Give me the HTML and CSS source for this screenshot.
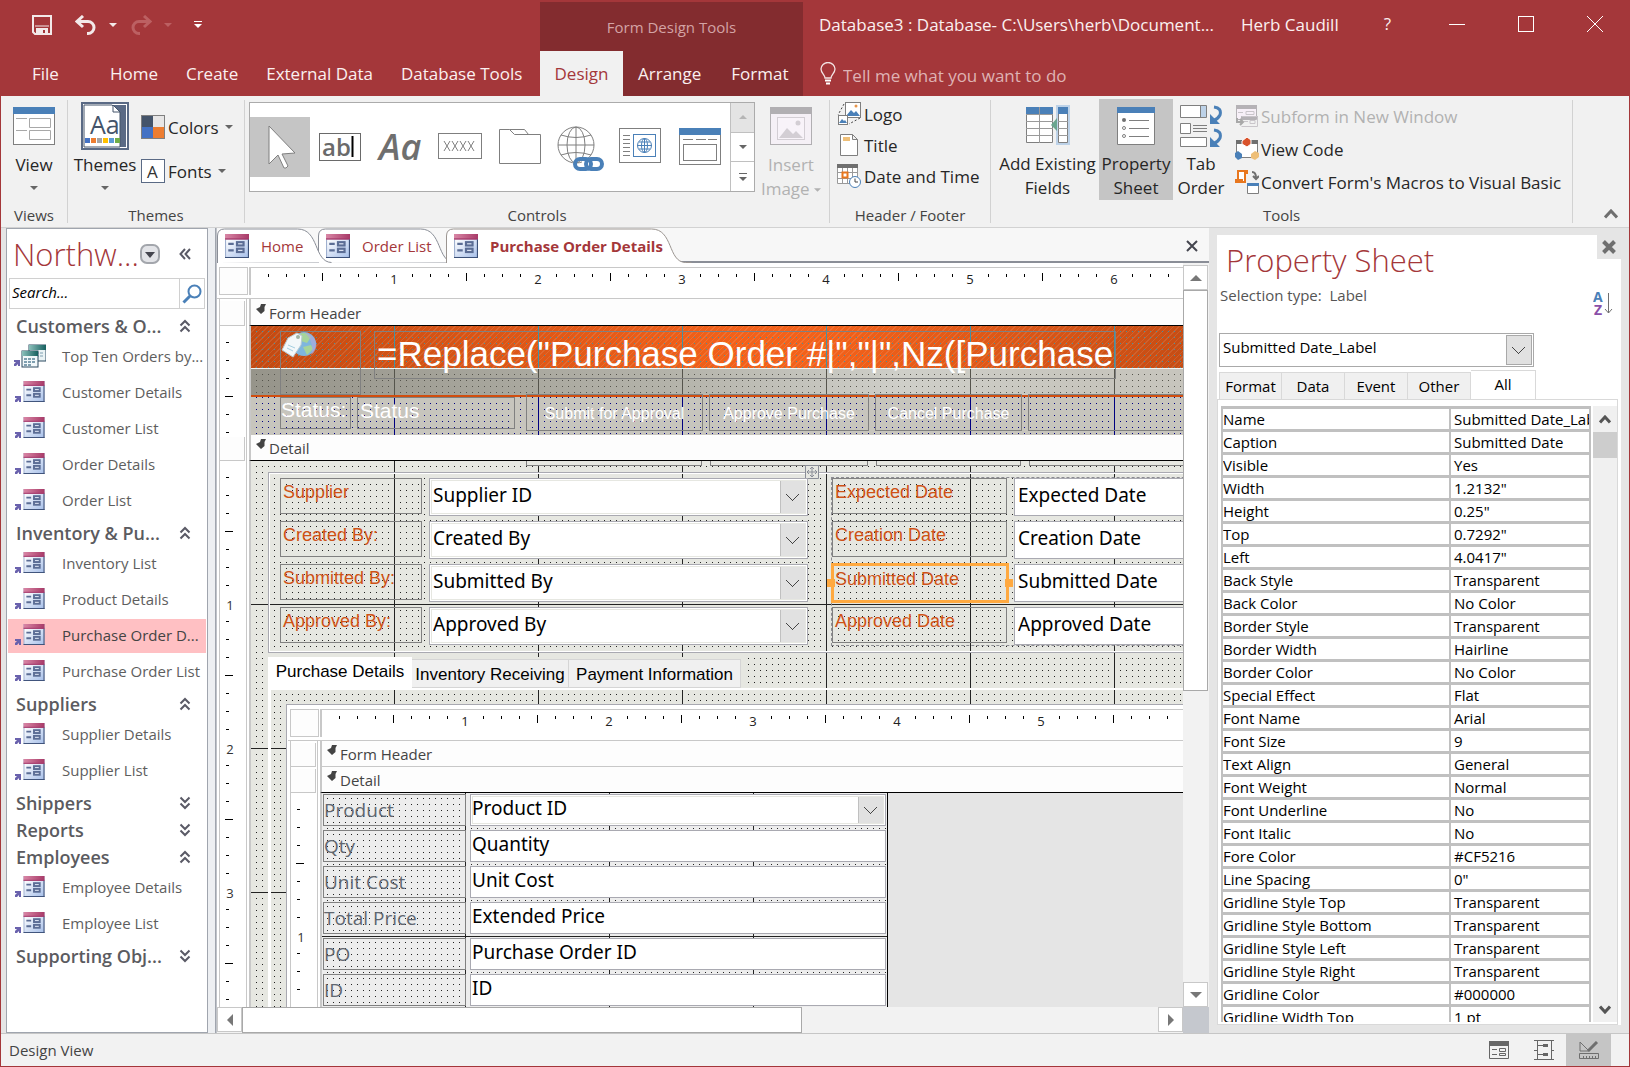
FILE: index.html
```html
<!DOCTYPE html>
<html lang="en">
<head>
<meta charset="utf-8">
<title>Database3 : Database</title>
<link rel="stylesheet" href="styles.css">
</head>
<body>
<svg class="defs" aria-hidden="true">
  <defs>
    <linearGradient id="g-pink" x1="0" x2="1"><stop offset="0" stop-color="#d987a6"/><stop offset="1" stop-color="#a83a68"/></linearGradient>
    <linearGradient id="g-body" x1="0" x2="1" y1="0" y2="1"><stop offset="0" stop-color="#ffffff"/><stop offset="1" stop-color="#a9c1ea"/></linearGradient>
    <linearGradient id="g-teal" x1="0" x2="1"><stop offset="0" stop-color="#8cc0bb"/><stop offset="1" stop-color="#16605f"/></linearGradient>
    <symbol id="form" viewBox="0 0 22 22">
      <rect width="22" height="22" fill="#9fb0cf"/><rect x="1" y="5" width="20" height="16" fill="url(#g-body)"/>
      <rect width="22" height="5" fill="url(#g-pink)"/><path d="M0 4.500h22" stroke="#a4376a"/><path d="M0 21.500h22M21.500 5v17" stroke="#3b5078"/>
      <path d="M3 9h5M3 15h5" stroke="#5b6d95" stroke-width="2"/><rect x="11" y="7.500" width="6" height="3" fill="#e8eefb" stroke="#5b6d95" stroke-width="2"/><rect x="11" y="13.500" width="6" height="3" fill="#e8eefb" stroke="#5b6d95" stroke-width="2"/>
    </symbol>
    <symbol id="nav-form" viewBox="0 0 30 22">
      <use href="#form" x="8" y="0" width="22" height="21"/>
      <path d="M0 15h6v6H4v-2L2 21H0v-2l2-2H0z" fill="#6a62ad"/>
    </symbol>
    <symbol id="nav-query" viewBox="0 0 32 24">
      <rect x="15" y="1" width="17" height="16" fill="#eaf3f5" stroke="#2d4a60"/><rect x="15" y="1" width="17" height="5" fill="url(#g-teal)"/>
      <path d="M18 9h11M18 12h11" stroke="#7f9fb0" stroke-dasharray="3 1"/>
      <rect x="8" y="7" width="16" height="16" fill="#f2f8fa" stroke="#2d4a60"/><rect x="8" y="7" width="16" height="5" fill="url(#g-teal)"/>
      <path d="M10 15h12M10 18h12M10 21h7" stroke="#7f9fb0" stroke-width="2" stroke-dasharray="3 1"/>
      <path d="M0 16h6v6H4v-2L2 22H0v-2l2-2H0z" fill="#6a62ad"/>
    </symbol>
    <symbol id="up2" viewBox="0 0 12 14"><path d="M1.500 6.500L6 2l4.500 4.500M1.500 12.500L6 8l4.500 4.500" fill="none" stroke="#5a5a66" stroke-width="2"/></symbol>
    <symbol id="down2" viewBox="0 0 12 14"><path d="M1.500 1.500L6 6l4.500-4.500M1.500 7.500L6 12l4.500-4.500" fill="none" stroke="#5a5a66" stroke-width="2"/></symbol>
    <symbol id="tri" viewBox="0 0 8 4"><path d="M0 0h8L4 4z" fill="currentColor"/></symbol>
    <symbol id="sect" viewBox="0 0 11 10"><path d="M5 0h5L8.500 3v4L5 10 0 5l4-2z" fill="#444"/></symbol>
  </defs>
</svg>

<div class="app">
<header class="top">
  <div class="quick">
    <button aria-label="Save"><svg width="20" height="20" viewBox="0 0 20 20"><path d="M1 1h18v18H3l-2-2z" fill="none" stroke="#f3e9e9" stroke-width="2"/><path d="M3 11h14" stroke="#f3e9e9"/><path d="M4 13h12v6h-3v-4h-2v4H4z" fill="#f3e9e9"/></svg></button>
    <button aria-label="Undo" class="undo"><svg width="22" height="20" viewBox="0 0 22 20"><path d="M8 1L2 6.500 8 12M2 6.500h11a6 6 0 0 1 0 12h-1" fill="none" stroke="#f3e9e9" stroke-width="3"/></svg></button>
    <button aria-label="Undo list" class="dd"><svg width="8" height="4"><use href="#tri"/></svg></button>
    <button aria-label="Redo" class="undo off"><svg width="22" height="20" viewBox="0 0 22 20"><path d="M14 1l6 5.500-6 5.500M20 6.500H9a6 6 0 0 0 0 12h1" fill="none" stroke="#bc6062" stroke-width="3"/></svg></button>
    <button aria-label="Redo list" class="dd off"><svg width="8" height="4"><use href="#tri"/></svg></button>
    <button aria-label="Customize" class="custom"><svg width="8" height="8" viewBox="0 0 8 8"><path d="M0 .500h8" stroke="#fff"/><path d="M0 3h8L4 7z" fill="#fff"/></svg></button>
  </div>
  <nav class="rtabs"><button class="file">File</button><button>Home</button><button>Create</button><button>External Data</button><button>Database Tools</button></nav>
  <div class="context">Form Design Tools</div>
  <nav class="rtabs ctx"><button class="on">Design</button><button>Arrange</button><button>Format</button></nav>
  <div class="winbar">
    <span class="title">Database3 : Database- C:\Users\herb\Document...</span>
    <span class="user">Herb Caudill</span>
    <button aria-label="Help" class="help">?</button>
    <button aria-label="Minimize"><svg width="16" height="16"><path d="M0 8.500h16" stroke="#fff"/></svg></button>
    <button aria-label="Maximize"><svg width="16" height="16"><rect x=".5" y=".5" width="15" height="15" fill="none" stroke="#fff"/></svg></button>
    <button aria-label="Close"><svg width="16" height="16"><path d="M0 0l16 16M16 0L0 16" stroke="#fff"/></svg></button>
  </div>
  <div class="tell"><svg width="16" height="23" viewBox="0 0 16 23"><path d="M5 16c0-3-4-5-4-9a7 6.500 0 0 1 14 0c0 4-4 6-4 9z" fill="none" stroke="#f3e3e3" stroke-width="1.300"/><path d="M5 18.500h6" stroke="#fff" stroke-width="2"/><path d="M6 21.500h4" stroke="#fff" stroke-width="2"/></svg><input aria-label="Tell me" placeholder="Tell me what you want to do"></div>
</header>

<section class="ribbon">
  <div class="rgroup views">
    <div class="rbody">
      <button class="big"><svg width="42" height="38" viewBox="0 0 42 38"><rect x=".5" y=".5" width="41" height="37" fill="#fff" stroke="#7f7f7f"/><path d="M0 0h42v7H0z" fill="#4a80b8"/><path d="M3 11.500h11M3 23.500h11" stroke="#a8a8a8"/><path d="M16.500 11.500h21v9h-21zM16.500 23.500h21v9h-21z" fill="none" stroke="#a8a8a8"/></svg><span>View</span><svg class="arr" width="8" height="4"><use href="#tri"/></svg></button>
    </div>
    <div class="rlabel">Views</div>
  </div>
  <div class="rgroup themes">
    <div class="rbody">
      <button class="big theme"><svg width="48" height="48" viewBox="0 0 48 48"><rect x="1" y="1" width="46" height="46" fill="#fff" stroke="#5a6a85" stroke-width="2"/><path d="M32 3h13v42H39V10z" fill="#5a6a85"/><path d="M3 45V3h28l8 7v35z" fill="#fff" stroke="#44546a"/><path d="M32 3v7h7z" fill="#fff" stroke="#44546a"/><text x="9" y="32" font-size="25" fill="#44546a">Aa</text><path d="M4 36h5v5H4z" fill="#4472c4"/><path d="M10 36h5v5h-5z" fill="#ed7d31"/><path d="M16 36h5v5h-5z" fill="#a5a5a5"/><path d="M22 36h5v5h-5z" fill="#ffc000"/><path d="M28 36h5v5h-5z" fill="#5b9bd5"/><path d="M34 36h5v5h-5z" fill="#70ad47"/></svg><span>Themes</span><svg class="arr" width="8" height="4"><use href="#tri"/></svg></button>
      <div class="stack two">
        <button><svg width="24" height="24" viewBox="0 0 24 24"><path d="M0 0h24v24H0z" fill="#7f7f7f"/><path d="M1 1h11v11H1z" fill="#44546a"/><path d="M12 1h11v11H12z" fill="#e7e6e6"/><path d="M1 12h11v11H1z" fill="#4472c4"/><path d="M12 12h11v11H12z" fill="#ed7d31"/></svg><span>Colors</span><svg class="arr" width="8" height="4"><use href="#tri"/></svg></button>
        <button><svg width="24" height="24" viewBox="0 0 24 24"><rect x=".5" y=".5" width="23" height="23" fill="#fff" stroke="#5a6a85"/><text x="6" y="19" font-size="17" fill="#333">A</text></svg><span>Fonts</span><svg class="arr" width="8" height="4"><use href="#tri"/></svg></button>
      </div>
    </div>
    <div class="rlabel">Themes</div>
  </div>
  <div class="rgroup controls">
    <div class="rbody">
      <div class="gallery">
        <button class="on" aria-label="Select"><svg width="60" height="60" viewBox="0 0 60 60"><path d="M19 9v38l9-9 6 13q2 1 4-2l-6-12 13-1z" fill="#fff" stroke="#7f7f7f"/></svg></button>
        <button aria-label="Text Box"><svg width="60" height="60" viewBox="0 0 60 60"><rect x="9.500" y="16.500" width="41" height="27" fill="#fff" stroke="#6a6a6a"/><text x="12" y="39" font-size="24" font-weight="600" fill="#6a6a6a">ab</text><path d="M42.500 19v21" stroke="#000" stroke-width="2"/></svg></button>
        <button aria-label="Label"><svg width="60" height="60" viewBox="0 0 60 60"><text x="9" y="43" font-size="36" font-weight="600" font-style="italic" fill="#6f6f6f">Aa</text></svg></button>
        <button aria-label="Button"><svg width="60" height="60" viewBox="0 0 60 60"><rect x="8.500" y="16.500" width="43" height="25" fill="#fff" stroke="#7f7f7f"/><path d="M14 24l6 10m0-10l-6 10M22 24l6 10m0-10l-6 10M30 24l6 10m0-10l-6 10M38 24l6 10m0-10l-6 10" stroke="#7f7f7f"/></svg></button>
        <button aria-label="Tab Control"><svg width="60" height="60" viewBox="0 0 60 60"><path d="M9.500 46.500v-34h10l5 5h26v29zM19.500 12.500h15l4 5" fill="none" stroke="#7f7f7f"/></svg></button>
        <button aria-label="Link"><svg width="60" height="60" viewBox="0 0 60 60"><g fill="none" stroke="#7f7f7f"><circle cx="26" cy="28" r="18"/><ellipse cx="26" cy="28" rx="9" ry="18"/><path d="M26 10v36M8 28h36M11 18q15 5 30 0M11 38q15-5 30 0"/></g><path d="M32 41h18v14H32z" fill="#fff"/><g fill="none" stroke="#4a80b8" stroke-width="4"><rect x="25" y="42" width="16" height="10" rx="5"/><rect x="36" y="42" width="16" height="10" rx="5"/></g></svg></button>
        <button aria-label="Web Browser Control"><svg width="60" height="60" viewBox="0 0 60 60"><rect x="9.500" y="11.500" width="41" height="34" fill="#fff" stroke="#7f7f7f"/><path d="M13 18.500h7M13 22.500h7M13 26.500h7M13 30.500h7M13 34.500h7M13 38.500h7" stroke="#7f7f7f"/><rect x="23.500" y="17.500" width="22" height="22" fill="#fff" stroke="#4a80b8"/><g fill="none" stroke="#4a80b8"><circle cx="34.500" cy="28.500" r="7"/><ellipse cx="34.500" cy="28.500" rx="3" ry="7"/><path d="M27 28.500h15M29 25h11M29 32h11M34.500 21v15"/></g></svg></button>
        <button aria-label="Navigation Control"><svg width="60" height="60" viewBox="0 0 60 60"><rect x="9.500" y="11.500" width="41" height="36" fill="#fff" stroke="#7f7f7f"/><path d="M9 11h42v7H9z" fill="#4a80b8"/><path d="M13 22.500h10M26 22.500h10M38 22.500h9" stroke="#7f7f7f"/><rect x="13.500" y="27.500" width="33" height="16" fill="#fff" stroke="#7f7f7f"/></svg></button>
        <div class="gscroll">
          <button class="dim" aria-label="Row up"><svg width="8" height="4"><path d="M0 4h8L4 0z" fill="#b5b5b5"/></svg></button>
          <button aria-label="Row down"><svg width="8" height="4"><use href="#tri"/></svg></button>
          <button aria-label="More"><svg width="8" height="8" viewBox="0 0 8 8"><path d="M0 .500h8" stroke="currentColor"/><path d="M0 4h8L4 8z" fill="currentColor"/></svg></button>
        </div>
      </div>
      <button class="big insert" disabled><svg width="42" height="38" viewBox="0 0 42 38"><rect x=".5" y=".5" width="41" height="37" fill="#f5f0f6" stroke="#b1afb2"/><path d="M0 0h42v7H0z" fill="#b1afb2"/><rect x="7.500" y="10.500" width="27" height="22" fill="#f8f3f9" stroke="#d3ced4"/><path d="M9 31l8-10 6 6 3-3 7 7z" fill="#d3ced4"/><circle cx="28" cy="16" r="2.500" fill="#d3ced4"/></svg><span>Insert<br>Image <svg width="7" height="4"><use href="#tri"/></svg></span></button>
    </div>
    <div class="rlabel">Controls</div>
  </div>
  <div class="rgroup hf">
    <div class="rbody">
      <div class="stack three">
        <button><svg width="24" height="24" viewBox="0 0 24 24"><path d="M7 2L1 13M23 16l-11 6" stroke="#444" stroke-dasharray="2 2"/><rect x="8.500" y=".5" width="15" height="15" fill="#fff" stroke="#7f7f7f"/><path d="M9 14l5-6 3 3 2-2 4 5z" fill="#4a80b8"/><circle cx="19" cy="4" r="1.500" fill="#e8954a"/><rect x="1.500" y="13.500" width="9" height="9" fill="#fff" stroke="#7f7f7f"/><path d="M2 21l3-4 2 2 1-1 2 3z" fill="#4a80b8"/></svg><span>Logo</span></button>
        <button><svg width="24" height="24" viewBox="0 0 24 24"><path d="M3.500 1.500h12l5 5v16h-17zM15.500 1.500v5h5" fill="#fff" stroke="#7f7f7f"/><path d="M6 4h7v4H6z" fill="#eebf78"/></svg><span>Title</span></button>
        <button><svg width="24" height="24" viewBox="0 0 24 24"><path d="M.500.500h20v19H.500zM.500 8.500h20M.500 14.500h20M5.500 3v17M10.500 3v17M15.500 3v17" fill="#fff" stroke="#9a9a9a"/><path d="M0 0h21v4H0z" fill="#6f6f6f"/><rect x="5.500" y="8.500" width="5" height="5" fill="#fff" stroke="#e8771e" stroke-width="2"/><circle cx="18" cy="18" r="5.500" fill="#fff" stroke="#4a80b8"/><path d="M18 14.500V18h3" fill="none" stroke="#444"/></svg><span>Date and Time</span></button>
      </div>
    </div>
    <div class="rlabel">Header / Footer</div>
  </div>
  <div class="rgroup tools">
    <div class="rbody">
      <button class="big add"><svg width="44" height="40" viewBox="0 0 44 40"><path d="M30 0h14v40H30z" fill="#bdd2e8"/><path d="M.500 2.500h26v35H.500z" fill="#fff" stroke="#7f7f7f"/><path d="M0 2h27v7H0z" fill="#4a80b8"/><path d="M13.500 2v36M0 9.500h27M0 16.500h27M0 23.500h27M0 30.500h27" stroke="#9a9a9a"/><path d="M32.500 2.500h9v35h-9z" fill="#fff" stroke="#7f7f7f"/><path d="M32 2h10v7H32z" fill="#4a80b8"/><path d="M32 16.500h10M32 23.500h10M32 30.500h10" stroke="#9a9a9a"/><path d="M31 13v13l-6-6z" fill="#6aa58f"/></svg><span>Add Existing<br>Fields</span></button>
      <button class="big prop on"><svg width="38" height="40" viewBox="0 0 38 40"><path d="M.500 1.500h37v37H.500z" fill="#fff" stroke="#7f7f7f"/><path d="M0 1h38v6H0z" fill="#4a80b8"/><circle cx="7" cy="14" r="2" fill="#6f6f6f"/><g fill="none" stroke="#7f7f7f"><circle cx="7" cy="22" r="1.500"/><circle cx="7" cy="30" r="1.500"/><path d="M12 14.500h20M12 22.500h20M12 30.500h20"/></g></svg><span>Property<br>Sheet</span></button>
      <button class="big taborder"><svg width="42" height="42" viewBox="0 0 42 42"><path d="M.500.500h26v12H.500zM.500 18.500h10v10H.500zM.500 32.500h26v9H.500z" fill="#fff" stroke="#7f7f7f"/><path d="M21 1h5v11h-5z" fill="#bdd2e8"/><path d="M20.500 1v11M13 20.500h14M13 23.500h14M13 26.500h14" stroke="#7f7f7f"/><path d="M34 2q8 1 6 8-2 4-7 6M34 25q8 1 6 8-2 4-7 6" fill="none" stroke="#4a80b8" stroke-width="3"/><path d="M30 9v10h10zM30 32v10h10z" fill="#4a80b8"/></svg><span>Tab<br>Order</span></button>
      <div class="stack three wide">
        <button disabled><svg width="24" height="24" viewBox="0 0 24 24"><path d="M1.500 1.500h20v14h-20z" fill="#f7f0f8" stroke="#b5b2b6"/><path d="M1 1h21v4H1zM6 12h17v3H6z" fill="#b5b2b6"/><path d="M3 8.500h5M11 7.500h8v3h-8zM6.500 12.500h16v10h-16M9 17.500h4M15 16.500h5v3h-5z" fill="none" stroke="#c9c5ca"/><path d="M2 14v4h6m-3-3l3 3-3 3" fill="none" stroke="#a8a8a8" stroke-width="2"/></svg><span>Subform in New Window</span></button>
        <button><svg width="24" height="24" viewBox="0 0 24 24"><path d="M1.500 3.500h21v17h-21z" fill="#fff" stroke="#7f7f7f"/><path d="M1 3h22v4H1z" fill="#6f6f6f"/><path d="M7 4l5-4 4 3v4l-4 3-5-3z" fill="#d9532c" stroke="#fff"/><path d="M0 16l3-2 4 3v4l-4 2-3-3z" fill="#4a80b8"/><path d="M16 17l4-3 4 2v4l-4 3-4-2z" fill="#eebf78"/></svg><span>View Code</span></button>
        <button><svg width="24" height="24" viewBox="0 0 24 24"><path d="M3 11V1h9v2h-2v9H1v-2h7" fill="#fff" stroke="#e8771e" stroke-width="2"/><path d="M17 2q4 0 4 6m-3-2l3 3 3-3" fill="none" stroke="#6f6f6f" stroke-width="2"/><path d="M12.500 13.500h11v10h-11z" fill="#fff" stroke="#7f7f7f"/><path d="M12 13h12v3H12z" fill="#4a80b8"/></svg><span>Convert Form's Macros to Visual Basic</span></button>
      </div>
    </div>
    <div class="rlabel">Tools</div>
  </div>
  <button class="collapse" aria-label="Collapse ribbon"><svg width="14" height="10" viewBox="0 0 14 10"><path d="M1 8.500L7 2l6 6.500" fill="none" stroke="#6f6f6f" stroke-width="3"/></svg></button>
</section>

<main class="work">
  <aside class="nav">
    <div class="nhead"><h1>Northw...</h1><button aria-label="Choose objects"><svg width="20" height="20" viewBox="0 0 20 20"><rect x="1" y="1" width="18" height="18" rx="6" fill="#e3e4e8" stroke="#a3a6ac" stroke-width="2"/><path d="M5 8h10l-5 6z" fill="#45464f"/></svg></button><button aria-label="Shutter" class="shut"><svg width="12" height="12" viewBox="0 0 12 12"><path d="M6 1L1.500 6 6 11M11 1L6.500 6l4.500 5" fill="none" stroke="#5a5a66" stroke-width="2"/></svg></button></div>
    <div class="search"><input aria-label="Search" placeholder="Search..."><button aria-label="Go"><svg width="20" height="20" viewBox="0 0 20 20"><circle cx="12.500" cy="7.500" r="6" fill="none" stroke="#4a80b8" stroke-width="2"/><path d="M8 12l-6.500 6.500" stroke="#4a80b8" stroke-width="3"/></svg></button></div>
    <button class="ngroup"><span>Customers &amp; O...</span><svg width="12" height="14"><use href="#up2"/></svg></button>
    <a class="nitem" href="#"><svg width="32" height="24"><use href="#nav-query"/></svg>Top Ten Orders by...</a>
    <a class="nitem" href="#"><svg width="30" height="22"><use href="#nav-form"/></svg>Customer Details</a>
    <a class="nitem" href="#"><svg width="30" height="22"><use href="#nav-form"/></svg>Customer List</a>
    <a class="nitem" href="#"><svg width="30" height="22"><use href="#nav-form"/></svg>Order Details</a>
    <a class="nitem" href="#"><svg width="30" height="22"><use href="#nav-form"/></svg>Order List</a>
    <button class="ngroup"><span>Inventory &amp; Pu...</span><svg width="12" height="14"><use href="#up2"/></svg></button>
    <a class="nitem" href="#"><svg width="30" height="22"><use href="#nav-form"/></svg>Inventory List</a>
    <a class="nitem" href="#"><svg width="30" height="22"><use href="#nav-form"/></svg>Product Details</a>
    <a class="nitem on" href="#"><svg width="30" height="22"><use href="#nav-form"/></svg>Purchase Order D...</a>
    <a class="nitem" href="#"><svg width="30" height="22"><use href="#nav-form"/></svg>Purchase Order List</a>
    <button class="ngroup"><span>Suppliers</span><svg width="12" height="14"><use href="#up2"/></svg></button>
    <a class="nitem" href="#"><svg width="30" height="22"><use href="#nav-form"/></svg>Supplier Details</a>
    <a class="nitem" href="#"><svg width="30" height="22"><use href="#nav-form"/></svg>Supplier List</a>
    <button class="ngroup"><span>Shippers</span><svg width="12" height="14"><use href="#down2"/></svg></button>
    <button class="ngroup"><span>Reports</span><svg width="12" height="14"><use href="#down2"/></svg></button>
    <button class="ngroup"><span>Employees</span><svg width="12" height="14"><use href="#up2"/></svg></button>
    <a class="nitem" href="#"><svg width="30" height="22"><use href="#nav-form"/></svg>Employee Details</a>
    <a class="nitem" href="#"><svg width="30" height="22"><use href="#nav-form"/></svg>Employee List</a>
    <button class="ngroup"><span>Supporting Obj...</span><svg width="12" height="14"><use href="#down2"/></svg></button>
  </aside>
  <div class="splitter"></div>

  <section class="doc">
    <div class="dtabs">
      <button class="dtab home"><svg class="shape" width="116" height="35" viewBox="0 0 116 35"><path d="M.500 35V8q0-7 7-7h73c22 0 16 33 34 33.500z" fill="#fff"/><path d="M.500 35V8q0-7 7-7h73c22 0 16 33 34 33.500" fill="none" stroke="#8a8e97"/></svg><svg width="24" height="24"><use href="#form"/></svg><span>Home</span></button>
      <button class="dtab orders"><svg class="shape" width="138" height="35" viewBox="0 0 138 35"><path d="M.500 35V8q0-7 7-7h95c22 0 16 33 34 33.500z" fill="#fff"/><path d="M.500 35V8q0-7 7-7h95c22 0 16 33 34 33.500" fill="none" stroke="#8a8e97"/></svg><svg width="24" height="24"><use href="#form"/></svg><span>Order List</span></button>
      <button class="dtab on"><svg class="shape" width="246" height="35" viewBox="0 0 246 35"><path d="M.500 35V8q0-7 7-7h198c22 0 16 33 34 33.500l6 .500z" fill="#fff"/><path d="M.500 35V8q0-7 7-7h198c22 0 16 33 34 33.500h6" fill="none" stroke="#9b9591"/></svg><svg width="24" height="24"><use href="#form"/></svg><span>Purchase Order Details</span></button>
      <button class="dclose" aria-label="Close document"><svg width="12" height="12" viewBox="0 0 12 12"><path d="M1 1l10 10M11 1L1 11" stroke="#45464f" stroke-width="2"/></svg></button>
    </div>
    <div class="dbody">
      <div class="designer outer">
        <div class="drow rule"><div class="gut"><i class="corner"></i></div><div class="hruler"><b>1</b><b>2</b><b>3</b><b>4</b><b>5</b><b>6</b></div></div>
        <div class="drow bar first"><div class="gut"><i></i></div><h2><svg width="11" height="10"><use href="#sect"/></svg>Form Header</h2></div>
        <div class="drow"><div class="gut vr"></div>
          <div class="fheader">
            <div class="band orange"></div><div class="band grey"></div><div class="band line"></div><div class="band status"></div>
            <div class="ctl picture"><svg width="36" height="26" viewBox="0 0 36 26"><circle cx="23" cy="12" r="12" fill="#7fb6dd"/><path d="M18 2q8-3 12 3l-4 6-6-2zM22 15l8-2 2 4-6 6z" fill="#a6d49a"/><path d="M24 1a12 12 0 0 1 6 22q4-12-6-22z" fill="#b3a6dd" opacity=".6"/><path d="M1 18L7 6l9-5 5 3-1 9-8 12z" fill="#f3f8fa" stroke="#b7cbd3"/><circle cx="17" cy="5" r="2" fill="#9fb4a5"/><path d="M7 13l7 3M6 16l6 3" stroke="#a5cfe0"/></svg></div>
            <div class="ctl headline">=Replace("Purchase Order #|","|",Nz([Purchase</div>
            <label class="ctl st1" for="status">Status:</label><input class="ctl st2" id="status" value="Status" readonly>
            <div class="cmds"><button>Submit for Approval</button><button>Approve Purchase</button><button>Cancel Purchase</button><button aria-label="Blank command"></button></div>
          </div>
        </div>
        <div class="drow bar"><div class="gut"><i></i></div><h2><svg width="11" height="10"><use href="#sect"/></svg>Detail</h2></div>
        <div class="drow grow"><div class="gut vr"><b>1</b><b>2</b><b>3</b></div>
          <div class="detail">
            <div class="stubs"><i></i><i></i><i></i><i></i></div>
            <div class="frame"></div>
            <svg class="move" width="14" height="14" viewBox="0 0 14 14"><path d="M.500.500h13v13H.500z" fill="#e6e7e1" stroke="#8a8e97"/><path d="M7 2v10M2 7h10M5 4l2-2 2 2M5 10l2 2 2-2M4 5L2 7l2 2M10 5l2 2-2 2" fill="none" stroke="#8a8e97"/></svg>
            <div class="layout left">
              <label for="f1">Supplier</label><select id="f1"><option>Supplier ID</option></select>
              <label for="f2">Created By:</label><select id="f2"><option>Created By</option></select>
              <label for="f3">Submitted By:</label><select id="f3"><option>Submitted By</option></select>
              <label for="f4">Approved By:</label><select id="f4"><option>Approved By</option></select>
            </div>
            <div class="layout right">
              <label for="f5">Expected Date</label><input id="f5" value="Expected Date" readonly>
              <label for="f6">Creation Date</label><input id="f6" value="Creation Date" readonly>
              <label for="f7" class="sel">Submitted Date</label><input id="f7" value="Submitted Date" readonly>
              <label for="f8">Approved Date</label><input id="f8" value="Approved Date" readonly>
            </div>
            <div class="ptabs"><button class="on">Purchase Details</button><button>Inventory Receiving</button><button>Payment Information</button></div>
            <div class="page"></div>
            <div class="designer inner">
              <div class="drow rule"><div class="gut"><i class="corner"></i></div><div class="hruler"><b>1</b><b>2</b><b>3</b><b>4</b><b>5</b></div></div>
              <div class="drow bar first shut"><div class="gut"><i></i></div><h2><svg width="11" height="10"><use href="#sect"/></svg>Form Header</h2></div>
              <div class="drow bar"><div class="gut"><i></i></div><h2><svg width="11" height="10"><use href="#sect"/></svg>Detail</h2></div>
              <div class="drow grow"><div class="gut vr"><b>1</b></div>
                <div class="subwrap"><div class="subdetail">
                  <label for="s1">Product</label><select id="s1"><option>Product ID</option></select>
                  <label for="s2">Qty</label><input id="s2" value="Quantity" readonly>
                  <label for="s3">Unit Cost</label><input id="s3" value="Unit Cost" readonly>
                  <label for="s4">Total Price</label><input id="s4" value="Extended Price" readonly>
                  <label for="s5">PO</label><input id="s5" value="Purchase Order ID" readonly>
                  <label for="s6">ID</label><input id="s6" value="ID" readonly>
                </div></div>
              </div>
            </div>
          </div>
        </div>
      </div>
      <div class="vscroll"><button aria-label="Scroll up"><svg width="12" height="6" viewBox="0 0 12 6"><path d="M0 6h12L6 0z" fill="#777"/></svg></button><i></i><button class="end" aria-label="Scroll down"><svg width="12" height="6" viewBox="0 0 12 6"><path d="M0 0h12L6 6z" fill="#777"/></svg></button></div>
      <div class="hscroll"><button aria-label="Scroll left"><svg width="6" height="12" viewBox="0 0 6 12"><path d="M6 0v12L0 6z" fill="#777"/></svg></button><i></i><button class="end" aria-label="Scroll right"><svg width="6" height="12" viewBox="0 0 6 12"><path d="M0 0v12l6-6z" fill="#777"/></svg></button></div>
      <div class="scorner"></div>
    </div>
  </section>

  <aside class="sheet">
    <div class="shead"><h1>Property Sheet</h1><button aria-label="Close pane"><svg width="14" height="14" viewBox="0 0 14 14"><path d="M1.500 1.500l11 11M12.500 1.500l-11 11" stroke="#6f6f6f" stroke-width="4"/></svg></button></div>
    <div class="seltype"><p>Selection type:&nbsp; Label</p><button aria-label="Sort"><svg width="20" height="26" viewBox="0 0 20 26"><text x="0" y="11" font-size="14" font-weight="700" fill="#4a80b8">A</text><text x="1" y="24" font-size="14" font-weight="700" fill="#8a4fa8">Z</text><path d="M15.500 2v20M12 18l3.500 4 3.500-4" fill="none" stroke="#6f6f6f"/></svg></button></div>
    <select class="objsel" aria-label="Object"><option>Submitted Date_Label</option></select>
    <div class="stabs"><button>Format</button><button>Data</button><button>Event</button><button>Other</button><button class="on">All</button></div>
    <div class="spage">
      <div class="stable"><table>
        <tr><th>Name</th><td>Submitted Date_Label</td></tr>
        <tr><th>Caption</th><td>Submitted Date</td></tr>
        <tr><th>Visible</th><td>Yes</td></tr>
        <tr><th>Width</th><td>1.2132"</td></tr>
        <tr><th>Height</th><td>0.25"</td></tr>
        <tr><th>Top</th><td>0.7292"</td></tr>
        <tr><th>Left</th><td>4.0417"</td></tr>
        <tr><th>Back Style</th><td>Transparent</td></tr>
        <tr><th>Back Color</th><td>No Color</td></tr>
        <tr><th>Border Style</th><td>Transparent</td></tr>
        <tr><th>Border Width</th><td>Hairline</td></tr>
        <tr><th>Border Color</th><td>No Color</td></tr>
        <tr><th>Special Effect</th><td>Flat</td></tr>
        <tr><th>Font Name</th><td>Arial</td></tr>
        <tr><th>Font Size</th><td>9</td></tr>
        <tr><th>Text Align</th><td>General</td></tr>
        <tr><th>Font Weight</th><td>Normal</td></tr>
        <tr><th>Font Underline</th><td>No</td></tr>
        <tr><th>Font Italic</th><td>No</td></tr>
        <tr><th>Fore Color</th><td>#CF5216</td></tr>
        <tr><th>Line Spacing</th><td>0"</td></tr>
        <tr><th>Gridline Style Top</th><td>Transparent</td></tr>
        <tr><th>Gridline Style Bottom</th><td>Transparent</td></tr>
        <tr><th>Gridline Style Left</th><td>Transparent</td></tr>
        <tr><th>Gridline Style Right</th><td>Transparent</td></tr>
        <tr><th>Gridline Color</th><td>#000000</td></tr>
        <tr><th>Gridline Width Top</th><td>1 pt</td></tr>
      </table></div>
      <div class="sscroll"><button aria-label="Scroll up"><svg width="12" height="9" viewBox="0 0 12 9"><path d="M1 7.500L6 2l5 5.500" fill="none" stroke="#555" stroke-width="3"/></svg></button><i></i><button class="end" aria-label="Scroll down"><svg width="12" height="9" viewBox="0 0 12 9"><path d="M1 1.500L6 7l5-5.500" fill="none" stroke="#555" stroke-width="3"/></svg></button></div>
    </div>
  </aside>
</main>

<footer class="statusbar">
  <span>Design View</span>
  <button aria-label="Form View"><svg width="20" height="18" viewBox="0 0 20 18"><path d="M.500.500h19v17H.500z" fill="none" stroke="#666"/><path d="M0 0h20v5H0z" fill="#666"/><path d="M3 8.500h5M3 13.500h5M10.500 7.500h6v3h-6zM10.500 12.500h6v2h-6z" fill="none" stroke="#666"/></svg></button>
  <button aria-label="Layout View"><svg width="20" height="20" viewBox="0 0 20 20"><path d="M0 .500h20M0 19.500h20M3.500 0v20M17.500 0v20M0 10.500h3M17 10.500h3M4 5.500h8M4 14.500h8" stroke="#666"/><path d="M9 4h5v3H9zM9 13h5v3H9z" fill="#666"/></svg></button>
  <button aria-label="Design View" class="on"><svg width="20" height="18" viewBox="0 0 20 18"><path d="M1 1v9h9zM.500 12.500h19v5H.500zM4.500 15v2M7.500 15v2M10.500 15v2M13.500 15v2M16.500 15v2" fill="none" stroke="#6f6f6f"/><path d="M18 1l-7 7-2 2" stroke="#6f6f6f" stroke-width="3"/></svg></button>
</footer>
</div>
</body>
</html>
```
FILE: styles.css
```css
:root { --red: #a4373a; --ui: "Open Sans", "Noto Sans", sans-serif; --line: #c8c8c8; }
* { box-sizing: border-box; }
body { margin: 0; font-family: var(--ui); font-size: 15px; color: #262626; }
button, input, select { font: inherit; color: inherit; border: 0; padding: 0; margin: 0; background: none; border-radius: 0; outline: 0; }
button { display: flex; align-items: center; justify-content: center; white-space: nowrap; }
svg { display: block; flex: none; }
svg text { font-family: var(--ui); }
h1, h2, p { margin: 0; font-weight: 400; }
i, b { font-style: normal; font-weight: 400; }
.defs { position: absolute; width: 0; height: 0; }

.app { display: flex; flex-direction: column; height: 100vh; border: 1px solid var(--red); border-top: 0; background: #e5e5e5; }

/* title bar and ribbon tabs */
.top { flex: none; display: grid; grid-template-columns: 539px 263px 1fr; grid-template-rows: 51px 45px; grid-auto-flow: column; background: var(--red); color: #fbf0f0; font-size: 17px; }
.quick { display: flex; align-items: center; padding: 0 0 2px 31px; color: #f3e9e9; }
.undo { margin-left: 23px; }
.dd { margin-left: 12px; }
.dd.off { color: #bc6062; }
.undo.off { margin-left: 13px; }
.custom { margin-left: 22px; }
.rtabs { display: flex; }
.rtabs button { padding: 0 14px; }
.rtabs .file { padding: 0 37px 0 31px; }
.context { background: #832c2f; color: #d3a3a5; font-size: 15px; display: flex; align-items: center; justify-content: center; border-top: 2px solid var(--red); }
.ctx { background: #832c2f; }
.ctx button { padding: 0 15px; }
.ctx .on { width: 83px; background: #f1f1f1; color: var(--red); }
.winbar { display: flex; align-items: stretch; line-height: 49px; padding-left: 16px; }
.title { flex: 1; min-width: 0; overflow: hidden; white-space: nowrap; }
.user { width: 112px; white-space: nowrap; }
.winbar button { width: 69px; height: 47px; }
.tell { display: flex; align-items: center; padding: 3px 0 0 17px; gap: 7px; }
.tell svg { margin-top: -4px; }
.tell input { flex: 1; height: 40px; }
.tell input::placeholder { color: #dfb3b4; }

/* ribbon */
.ribbon { flex: none; display: flex; height: 132px; background: #f1f1f1; border-bottom: 1px solid #d2d2d2; font-size: 17px; }
.rgroup { flex: none; display: flex; flex-direction: column; margin: 4px 0; border-right: 1px solid #d2d2d2; }
.rbody { flex: 1; display: flex; }
.rlabel { height: 20px; line-height: 24px; text-align: center; font-size: 15px; color: #444; }
.arr, .insert svg { color: #666; }
.big { flex-direction: column; justify-content: flex-start; height: 101px; padding-top: 7px; line-height: 24px; }
.big span { margin-top: 8px; }
.big .arr { margin-top: 9px; }
.big span svg { display: inline-block; vertical-align: middle; color: #b1b1b1; }
.big.on { background: #c5c5c5; }
.big:disabled, .stack button:disabled { color: #b1b1b1; }
.views { width: 67px; }
.views .big { width: 66px; }
.themes { width: 177px; }
.themes .rbody { padding-left: 7px; }
.theme { padding-top: 2px; width: 60px; }
.theme span { margin-top: 3px; }
.stack { display: flex; flex-direction: column; align-items: flex-start; }
.stack button { gap: 3px; }
.stack .arr { margin-left: 3px; }
.two { padding: 15px 0 0 6px; gap: 20px; }
.two button, .three button { height: 24px; }
.three { padding: 2px 0 0 7px; gap: 7px; }
.wide { padding: 4px 0 0 6px; gap: 9px; }
.wide button { gap: 2px; }
.controls { width: 585px; }
.controls .rbody { padding-left: 4px; }
.gallery { display: flex; align-items: center; margin-top: 2px; width: 506px; height: 90px; background: #fff; border: 1px solid #ababab; }
.gallery .on { background: #c5c5c5; }
.gscroll { display: flex; flex-direction: column; align-self: stretch; width: 24px; border-left: 1px solid #c0c0c0; }
.gscroll button { flex: 1; color: #666; border-top: 1px solid #c0c0c0; }
.gscroll .dim { background: #e4e4e4; border-top: 0; }
.insert { width: 72px; }
.hf { width: 161px; }
.tools { width: 582px; }
.tools .rbody { padding-left: 5px; }
.tools .big { margin-top: -1px; }
.add { width: 103px; padding-top: 6px; }
.add span, .prop span, .taborder span { margin-top: 7px; }
.prop { width: 74px; padding-top: 7px; }
.tools .prop span { margin-top: 6px; }
.taborder { width: 56px; padding-top: 6px; }
.taborder span { margin-top: 5px; }
.collapse { margin-left: auto; align-self: flex-end; padding: 0 11px 8px 0; }

/* working area */
.work { flex: 1; min-height: 0; display: flex; }
.nav { flex: none; width: 202px; margin-left: 5px; overflow: hidden; background: #fff; border: 1px solid #a0a5ae; color: #5e5e5e; }
.splitter { flex: none; width: 8px; background: #edeff2; border-right: 1px solid #a0a5ae; }
.nhead { display: flex; align-items: center; height: 49px; padding-left: 6px; }
.nhead h1 { width: 127px; font-size: 31px; font-weight: 300; line-height: 48px; color: var(--red); white-space: nowrap; }
.shut { margin-left: 19px; }
.search { display: flex; width: 196px; height: 31px; margin: 0 0 3px 2px; border: 1px solid #d0d0d0; }
.search input { flex: 1; min-width: 0; padding: 0 0 4px 2px; font-size: 15px; font-style: italic; }
.search input::placeholder { color: #000; }
.search button { width: 25px; border-left: 1px solid #d0d0d0; }
.ngroup { width: 100%; height: 27px; padding: 0 16px 0 9px; justify-content: space-between; font-size: 18px; font-weight: 600; color: #5b5b60; }
.nitem { display: flex; align-items: center; height: 36px; border: 1px solid transparent; background-clip: padding-box; padding: 0 0 2px 6px; color: inherit; text-decoration: none; white-space: nowrap; }
.nitem svg { width: 32px; margin-right: 16px; }
.nitem.on { background-color: #ffc0c3; color: #444; }

/* document window */
.doc { flex: 1; min-width: 0; display: flex; flex-direction: column; border-left: 1px solid #c0c3c9; }
.dtabs { flex: none; display: flex; height: 35px; background: #f7f7f7; box-shadow: inset 0 -2px #8a8e97; color: var(--red); }
.dtab { position: relative; justify-content: flex-start; padding-left: 8px; gap: 12px; }
.dtab .shape { position: absolute; left: 0; top: 0; }
.dtab svg:not(.shape), .dtab span { position: relative; }
.home { width: 101px; z-index: 1; }
.orders { width: 128px; }
.dtab.on { width: 240px; font-weight: 700; }
.dclose { margin-left: auto; width: 35px; }
.dbody { flex: 1; min-height: 0; display: grid; grid-template: minmax(0, 1fr) 26px / minmax(0, 1fr) 26px; background: #fff; }

.designer { display: flex; flex-direction: column; overflow: hidden; background: #fff; }
.outer { padding-top: 4px; }
.drow { display: flex; flex: none; }
.drow.grow { flex: 1; min-height: 0; }
.gut { flex: none; width: 32px; padding: 0 1px 0 2px; }
.gut + * { flex: 1; min-width: 0; border-left: 2px solid var(--line); }
.rule { height: 31px; }
.corner { display: block; height: 28px; border: 1px solid var(--line); background: #fdfdfd; }
.hruler { display: flex; height: 28px; padding-left: 71px; overflow: hidden; border-top: 1px solid var(--line);
  background:
    linear-gradient(#000, #000) 71px 5px / 1px 8px no-repeat,
    linear-gradient(90deg, transparent 71px, #000 71px, #000 72px, transparent 72px) 0 5px / 144px 8px repeat-x,
    linear-gradient(90deg, transparent 17px, #000 17px) 0 6px / 18px 3px repeat-x; }
.hruler b { flex: none; width: 144px; height: 24px; display: flex; justify-content: center; line-height: 22px; font-size: 13px; color: #222; background: linear-gradient(#fff, #fff) center / 10px 24px no-repeat; }
.bar { height: 26px; }
.bar.first { height: 28px; border-top: 1px solid transparent; }
.bar.first.shut { height: 27px; margin: 0; }
.bar.first > * { border-top: 1px solid var(--line); margin-top: -1px; }
.bar .gut { padding-top: 2px; background: linear-gradient(var(--line), var(--line)) 29px 0 / 1px 100% no-repeat, linear-gradient(var(--line), var(--line)) 2px 0 / 1px 100% no-repeat; }
.bar .gut i { display: block; width: 25px; height: 100%; margin-left: 1px; border: solid var(--line); border-width: 0 1px 1px 0; background: #fdfdfd; }
.bar h2 { display: flex; align-items: center; gap: 2px; padding: 1px 0 0 5px; font-size: 15px; line-height: 20px; color: #444; background: #fdfdfd; border-bottom: 1px solid #000; }
.bar.shut h2 { border-bottom-color: var(--line); }
.bar h2 svg { margin-top: -8px; }
.vr { overflow: hidden; font-size: 13px; color: #333;
  background:
    linear-gradient(var(--line), var(--line)) 29px 0 / 1px 100% no-repeat,
    linear-gradient(var(--line), var(--line)) 2px 0 / 1px 100% no-repeat,
    linear-gradient(transparent 70px, #000 70px, #000 71px, transparent 71px) 8px 0 / 8px 144px repeat-y,
    linear-gradient(transparent 16px, #000 16px, #000 17px, transparent 17px) 9px 0 / 3px 18px repeat-y; }
.vr b { display: block; height: 144px; padding: 60px 0; margin: 0 8px 0 1px; line-height: 24px; text-align: center; background: linear-gradient(#fff, #fff) center / 16px 16px no-repeat; }
.vr b:first-child { margin-top: 72px; }

/* form header surface */
.fheader { position: relative; overflow: hidden; color: #fff; font-family: "Liberation Sans", Arial, sans-serif; }
.band { --dot: #000080; background:
    linear-gradient(90deg, transparent 143px, var(--dot) 143px) 0 0 / 144px 100%,
    conic-gradient(at 5px 5px, transparent 25%, var(--dot) 0 50%, transparent 0) 0 0 / 6px 6px,
    var(--fill); }
.orange { --dot: #3f93a6; height: 43px; border-bottom: 1px solid #f3f3ef; --fill: repeating-linear-gradient(135deg, rgba(255,255,255,.1) 0 1px, transparent 1px 4px), linear-gradient(90deg, #c24a12, #f2611a 52%, #f2611a 62%, #c64d14); }
.grey { --dot: #55544c; height: 26px; --fill: linear-gradient(90deg, #96948a, #b4b3aa 45%, #cfcfc9 70%, #c7c5bd 90%); }
.line { height: 2px; background: #d14e0f; }
.status { height: 38px; --fill: linear-gradient(#c7c5bd, #c7c5bd); background-position: 0 0, 0 1px, 0 0; }
.ctl { position: absolute; border: 1px solid #808080; }
.picture { left: 29px; top: 5px; width: 81px; height: 64px; }
.headline { left: 123px; top: 5px; width: 742px; height: 48px; padding-left: 2px; overflow: hidden; white-space: nowrap; font-size: 35px; line-height: 44px; }
.st1, .st2 { top: 71px; height: 32px; font-size: 21px; line-height: 24px; }
.st1 { left: 29px; width: 71px; }
.st2 { left: 106px; width: 158px; padding: 0 0 4px 2px; }
.cmds { position: absolute; left: 275px; right: -20px; top: 68px; display: flex; gap: 6px; }
.cmds button { height: 37px; padding-top: 2px; font-size: 16px; border: 1px solid #808080; }
.cmds button:nth-child(1) { width: 177px; }
.cmds button:nth-child(2) { width: 160px; }
.cmds button:nth-child(3) { width: 147px; }
.cmds button:nth-child(4) { flex: 1; }

/* detail surface */
.detail { position: relative; overflow: hidden; background:
    linear-gradient(90deg, transparent 143px, #222 143px) 0 0 / 144px 100%,
    linear-gradient(transparent 143px, #222 143px) 0 0 / 100% 144px,
    conic-gradient(at 5px 5px, transparent 25%, #222 0 50%, transparent 0) 0 0 / 6px 6px,
    #e6e7e1; }
.stubs { position: absolute; left: 275px; right: -20px; top: -1px; display: flex; gap: 8px; height: 6px; }
.stubs i { border: 1px solid #808080; border-top-color: #aaa; background: #e6e7e1; }
.stubs i:nth-child(1) { width: 176px; }
.stubs i:nth-child(2) { width: 158px; }
.stubs i:nth-child(3) { width: 145px; }
.stubs i:nth-child(4) { flex: 1; }
.frame { position: absolute; left: 17px; right: -10px; top: 11px; height: 181px; border: 1px solid #a9a9b1; box-shadow: inset 0 0 0 1px #fff; }
.move { position: absolute; left: 554px; top: 4px; }
.layout { position: absolute; top: 17px; display: grid; gap: 5px 7px; }
.layout.left { left: 29px; grid-template: repeat(4, 38px) / 142px 379px; }
.layout.right { left: 581px; grid-template: repeat(4, 38px) / 175px 300px; outline: 1px dashed #8c8c92; }
.layout label { height: 36px; padding-left: 2px; border: 1px solid #808080; font: 18px/27px "Liberation Sans", Arial, sans-serif; color: #cf5216; }
.layout input, .layout select, .subdetail input, .subdetail select { width: 100%; height: 38px; padding: 0 0 4px 3px; font-family: "Noto Sans", sans-serif; font-size: 19px; color: #000; background: #fff; border: 1px solid #a9a9b1; }
select { appearance: none; }
.layout select, .subdetail select { box-shadow: inset 0 0 0 1px #fff, inset 0 0 0 2px #e6e7e1; background:
    linear-gradient(45deg, transparent 45%, #444 45% 55%, transparent 55%) right 14px center / 7px 7px no-repeat,
    linear-gradient(-45deg, transparent 45%, #444 45% 55%, transparent 55%) right 8px center / 7px 7px no-repeat,
    linear-gradient(90deg, #c0c0c0 1px, #e1e1e1 1px) right 1px top 1px / 26px 34px no-repeat, #fff; }
.layout .sel { position: relative; height: 40px; margin: -1px -2px 0 -1px; border: 3px solid #ffa940; padding-left: 1px; line-height: 26px; }
.sel::before, .sel::after { content: ""; position: absolute; top: 13px; width: 8px; height: 8px; background: #ffa940; }
.sel::before { left: -7px; }
.sel::after { right: -7px; }
.ptabs { position: absolute; left: 17px; top: 196px; width: 477px; height: 33px; display: flex; align-items: flex-end; background: #e6e7e1; font-family: "Liberation Sans", Arial, sans-serif; font-size: 17px; color: #000; }
.ptabs button { height: 29px; width: 157px; margin-bottom: 2px; padding-top: 2px; background: #f0f0f0; border: 1px solid #d5d5d5; border-left: 0; }
.ptabs button:last-child { width: 172px; }
.ptabs .on { width: 144px; height: 33px; margin: 0; padding: 0 0 3px; background: #fff; border: 0; }
.page { position: absolute; left: 17px; right: -10px; top: 227px; bottom: -10px; border: 2px solid #fff; border-left-width: 3px; }
.inner { position: absolute; left: 35px; right: 0; top: 243px; bottom: 0; border: solid #a9a9b1; border-width: 1px 0 0 1px; padding: 4px 0 0 1px; }
.subwrap { background: #e5e5e5; overflow: hidden; }
.subdetail { width: 566px; height: 400px; padding: 1px 1px 0 1px; display: grid; grid-template: repeat(6, 32px) / 143px 416px; gap: 4px; align-content: start; border-right: 1px solid #000; background:
    linear-gradient(90deg, transparent 143px, #222 143px) 0 0 / 144px 100%,
    linear-gradient(transparent 143px, #222 143px) 0 0 / 100% 144px,
    conic-gradient(at 5px 5px, transparent 25%, #222 0 50%, transparent 0) 0 0 / 6px 6px,
    #ededed; }
.subdetail label { border: 1px solid #808080; font-size: 19px; line-height: 30px; color: #5f6670; }
.subdetail input, .subdetail select { height: 32px; padding-left: 1px; }

/* designer scroll bars */
.vscroll, .hscroll { display: flex; background: #f2f2f2; }
.vscroll { flex-direction: column; padding: 2px 1px 0 0; }
.vscroll button, .hscroll button { flex: none; width: 25px; height: 25px; background: #fff; border: 1px solid var(--line); }
.vscroll i, .hscroll i { background: #fff; border: 1px solid #a9a9a9; }
.vscroll i { height: 54%; }
.hscroll i { width: 58%; }
.vscroll .end { margin-top: auto; }
.hscroll .end { margin-left: auto; }
.scorner { background: #c5c8ce; }

/* property sheet */
.sheet { flex: none; width: 404px; margin: 7px 8px 8px; display: flex; flex-direction: column; background: #fff; color: #000; }
.shead { display: flex; justify-content: space-between; align-items: flex-start; height: 49px; }
.shead h1 { padding-left: 9px; font-size: 31px; font-weight: 300; line-height: 50px; color: var(--red); }
.shead button { width: 24px; height: 24px; background: #e5e5e5; }
.seltype { display: flex; justify-content: space-between; height: 49px; padding: 0 8px 0 3px; color: #555; line-height: 22px; }
.seltype button { align-self: flex-start; margin-top: 7px; }
.objsel { flex: none; width: 315px; height: 34px; margin-left: 2px; padding: 0 0 6px 3px; border: 1px solid #a9a9a9; background:
    linear-gradient(45deg, transparent 45%, #444 45% 55%, transparent 55%) right 14px center / 7px 7px no-repeat,
    linear-gradient(-45deg, transparent 45%, #444 45% 55%, transparent 55%) right 8px center / 7px 7px no-repeat,
    linear-gradient(#e1e1e1, #e1e1e1) right 2px center / 24px 28px no-repeat,
    linear-gradient(#a9a9a9, #a9a9a9) right 1px center / 26px 30px no-repeat, #fff; }
.stabs { flex: none; display: flex; align-items: flex-end; height: 32px; padding-left: 2px; }
.stabs button { width: 63px; height: 27px; background: #f0f0f0; border: 1px solid #d9d9d9; border-bottom: 0; border-left: 0; }
.stabs button:first-child { border-left: 1px solid #d9d9d9; }
.stabs .on { width: 65px; height: 29px; background: #fff; padding-bottom: 3px; }
.spage { flex: 1; min-height: 0; display: flex; margin-right: 3px; padding: 6px 0 2px 3px; border: 1px solid #d9d9d9; }
.stable { flex: 1; min-width: 0; overflow: hidden; }
.stable table { width: 100%; border-collapse: collapse; table-layout: fixed; }
.stable th, .stable td { height: 23px; padding: 0; border: solid #c0c0c0; border-width: 3px 2px; text-align: left; font-weight: 400; line-height: 19px; white-space: nowrap; overflow: hidden; }
.stable td { width: 140px; padding-left: 3px; }
.sscroll { flex: none; width: 24px; margin-left: 2px; display: flex; flex-direction: column; background: #f0f0f0; }
.sscroll button { height: 26px; }
.sscroll i { height: 26px; background: #cdcdcd; }
.sscroll .end { margin-top: auto; }

.statusbar { flex: none; display: flex; align-items: center; height: 33px; padding: 0 18px 0 8px; background: #f2f2f2; border-top: 1px solid #c6c6c6; color: #444; }
.statusbar span { flex: 1; }
.statusbar button { width: 45px; height: 32px; }
.statusbar .on { background: #c5c5c5; }
```
